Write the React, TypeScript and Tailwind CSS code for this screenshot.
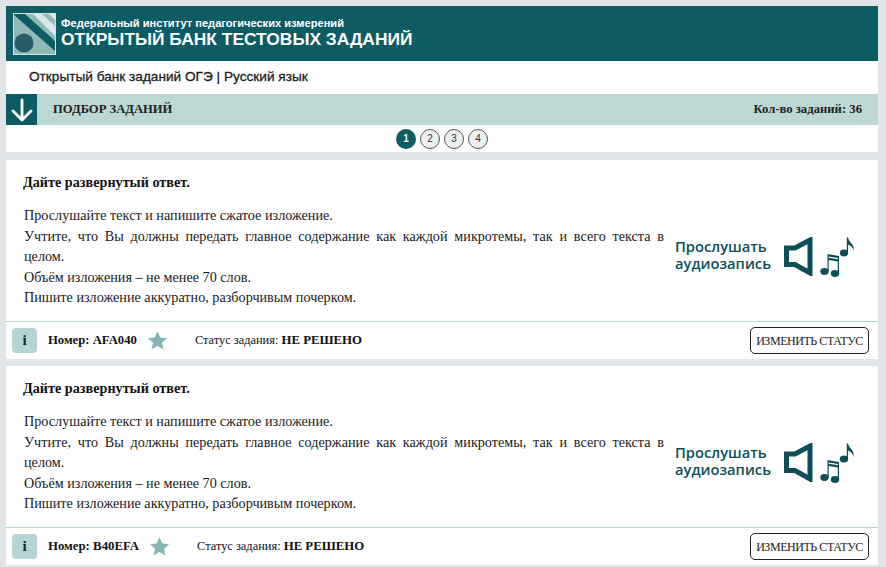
const serif = "font-['Liberation_Serif',serif]";
const sans = "font-['Liberation_Sans',sans-serif]";

function Logo() {
  return (
    <svg width="43" height="42" viewBox="0 0 43 42" className="shrink-0">
      <rect x="0.500" y="0.500" width="42" height="41" fill="#8fb9b5" stroke="#d5e5e3" />
      <polygon points="1,1 12,1 42,28 42,38 1,2" fill="#0d5b63" />
      <polygon points="20,1 29,1 42,13 42,23" fill="#d8e8e6" />
      <polygon points="36,1 42,1 42,7" fill="#d8e8e6" />
      <circle cx="11" cy="30" r="9.500" fill="#2c5c68" />
    </svg>
  );
}

function Speaker() {
  return (
    <svg width="29" height="39" viewBox="0 0 29 39" className="shrink-0">
      <path d="M2.500 11 H11 L26 3 V36 L11 27.500 H2.500 Z" fill="none" stroke="#0d4f59" strokeWidth="5" strokeLinejoin="miter" />
    </svg>
  );
}

function Notes() {
  return (
    <svg width="37" height="40" viewBox="0 0 37 40" className="shrink-0">
      <g fill="#0d4f59">
        <ellipse cx="4.500" cy="34.500" rx="4.200" ry="3.400" />
        <ellipse cx="15" cy="36.500" rx="4.200" ry="3.400" />
        <path d="M7.500 34 V17 L19 19 V36 H17.800 V24.500 L8.700 23 V34 Z" />
        <path d="M8.700 19.500 L17.800 21 V22.300 L8.700 20.800 Z" fill="#ffffff" />
        <ellipse cx="24" cy="16" rx="4.200" ry="3.400" />
        <path d="M26.800 16 V0.500 H28 C29 6 35 7 33.500 14 C33 10 30.500 8.500 28 7.500 V16 Z" />
      </g>
    </svg>
  );
}

function Star() {
  return (
    <svg width="21" height="21" viewBox="0 0 24 24" className="shrink-0">
      <path d="M12 1.500 L15.200 8.600 L23 9.400 L17.100 14.600 L18.900 22.300 L12 18.300 L5.100 22.300 L6.900 14.600 L1 9.400 L8.800 8.600 Z" fill="#8ab3b8" />
    </svg>
  );
}

function Card({ number, numberSize }: { number: string; numberSize: string }) {
  return (
    <section className="bg-white h-[199px] flex flex-col">
      <div className="flex-1 flex pl-[17px] pr-[23px]">
        <div className="w-[641px] shrink-0">
          <p className="font-bold text-[14.200px] leading-[15px] text-[#111] mt-[15px]">Дайте развернутый ответ.</p>
          <div className="mt-[15px] pl-px text-[14.200px] leading-[20.500px] text-[#1a1a1a]">
            <p>Прослушайте текст и напишите сжатое изложение.</p>
            <p className="text-justify [text-align-last:justify]">Учтите, что Вы должны передать главное содержание как каждой микротемы, так и всего текста в</p>
            <p>целом.</p>
            <p>Объём изложения – не менее 70 слов.</p>
            <p>Пишите изложение аккуратно, разборчивым почерком.</p>
          </div>
        </div>
        <div className="flex items-start ml-[11px] mt-[77px]">
          <div className="font-['Open_Sans',sans-serif] text-[14.700px] leading-[17px] font-semibold text-[#0d4f59] mt-[1px] w-[109px]">
            Прослушать<br />аудиозапись
          </div>
          <Speaker />
          <div className="ml-[7px]"><Notes /></div>
        </div>
      </div>
      <footer className="h-[38px] border-t border-[#b7d5d3] flex items-center pl-[6px] pr-[9px] text-[12.400px] text-[#111]">
        <div className="w-[25px] h-[25px] rounded-[4px] bg-[#b5d4d3] flex items-center justify-center font-bold text-[15px] text-[#123]">i</div>
        <b className={`ml-[11px] mr-[10px] ${numberSize}`}>Номер: {number}</b>
        <Star />
        <span className="ml-[27px]">Статус задания: <b className="text-[12.800px]">НЕ РЕШЕНО</b></span>
        <button className="ml-auto w-[119px] h-[27px] border border-[#222] rounded-[5px] bg-white text-[12px] tracking-[-0.450px] text-[#222]">ИЗМЕНИТЬ СТАТУС</button>
      </footer>
    </section>
  );
}

export default function App() {
  return (
    <div className={`w-[886px] h-[567px] overflow-hidden bg-[#e3e6e8] pl-[6px] pr-[8px] pt-[6px] ${serif}`}>
      <header className={`h-[55px] bg-[#0d5b63] flex items-center pl-[7px] ${sans} text-white`}>
        <Logo />
        <div className="ml-[5px] -mt-[2px]">
          <div className="text-[11.100px] leading-[14px] font-bold">Федеральный институт педагогических измерений</div>
          <div className="text-[17.400px] leading-[19px] font-bold">ОТКРЫТЫЙ БАНК ТЕСТОВЫХ ЗАДАНИЙ</div>
        </div>
      </header>
      <div className={`h-[33px] bg-white flex items-center pl-[23px] ${sans} text-[13.650px] font-medium text-[#1c1c1c] [-webkit-text-stroke:0.3px_#1c1c1c]`}>
        Открытый банк заданий ОГЭ | Русский язык
      </div>
      <div className="h-[31px] bg-[#bdd7d5] flex items-center">
        <div className="w-[31px] h-[31px] bg-[#0d5b63] flex items-center justify-center">
          <svg width="24" height="24" viewBox="0 0 24 24" fill="none" stroke="#fff" strokeWidth="2.800" strokeLinecap="round" strokeLinejoin="round">
            <path d="M12 2 V21 M3 13 L12 22 L21 13" />
          </svg>
        </div>
        <span className="ml-[16px] font-bold text-[12.600px] text-[#222]">ПОДБОР ЗАДАНИЙ</span>
        <span className="ml-auto mr-[16px] font-bold text-[12.700px] text-[#222]">Кол-во заданий: 36</span>
      </div>
      <div className={`h-[27px] bg-white flex items-center justify-center gap-[4px] ${sans} text-[10px] mb-[8px]`}>
        <span className="w-[20px] h-[20px] rounded-full bg-[#0d5b63] text-white font-bold flex items-center justify-center">1</span>
        {["2", "3", "4"].map((n) => (
          <span key={n} className="w-[20px] h-[20px] rounded-full border border-[#555] bg-[#eef0f0] text-[#333] flex items-center justify-center">{n}</span>
        ))}
      </div>
      <Card number="AFA040" numberSize="text-[12.700px]" />
      <div className="h-[7px]" />
      <Card number="B40EFA" numberSize="text-[12.800px]" />
    </div>
  );
}
